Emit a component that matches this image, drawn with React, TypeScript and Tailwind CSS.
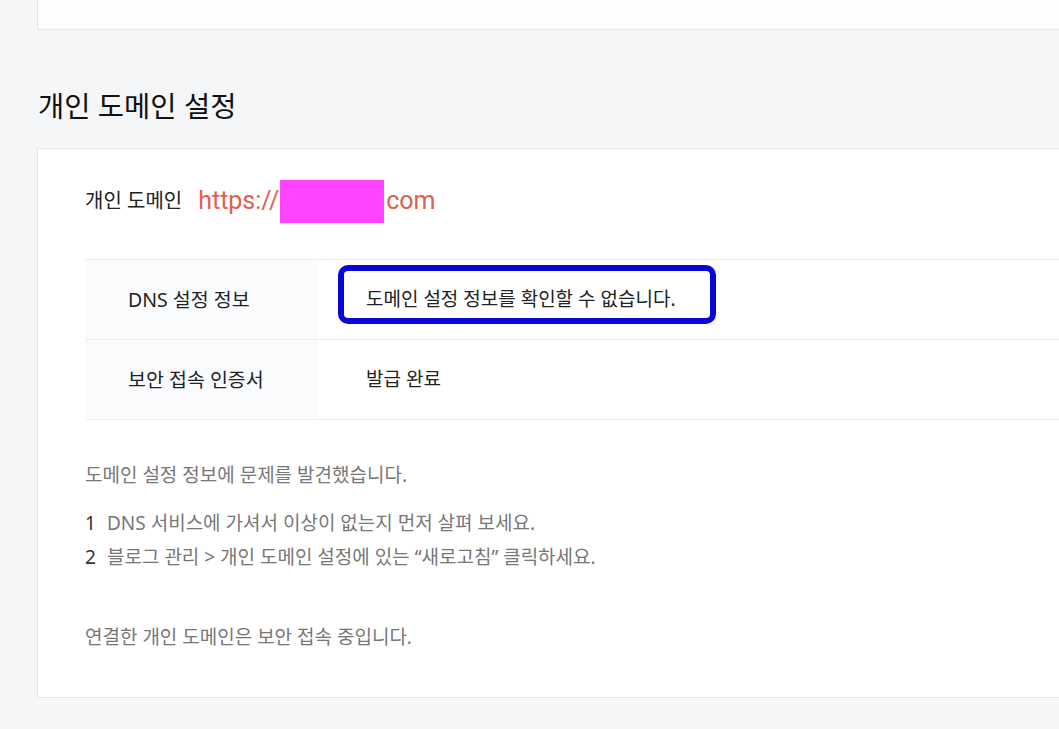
export default function App() {
  const font = { fontFamily: '"Noto Sans", "Noto Sans CJK KR", sans-serif' }
  return (
    <div className="w-[1059px] h-[729px] overflow-hidden bg-[#f5f6f8]" style={font}>
      {/* previous section card (cut off at top) */}
      <div className="ml-[37px] w-[1100px] h-[30px] bg-[#fcfdfe] border border-t-0 border-[#e3e6ea]" />

      <h2 className="ml-[38px] mt-[58px] h-[36px] leading-[36px] text-[28.5px] text-[#111]">
        개인 도메인 설정
      </h2>

      <section className="mt-[24px] ml-[37px] w-[1100px] h-[550px] bg-white border border-[#e3e6ea] pl-[47px]">
        <div className="flex items-center h-[36px] mt-[34px] mb-[40px]">
          <span className="text-[20px] text-[#222]">개인 도메인</span>
          <span
            className="ml-[16px] flex items-center text-[25px] text-[#e0604f]"
            style={{ fontFamily: 'Roboto, "Liberation Sans", sans-serif' }}
          >
            https://
            <span className="inline-block ml-[1px] mr-[2px] w-[104px] h-[43px] bg-[#ff44ff]" />
            com
          </span>
        </div>

        <div className="border-t border-[#eceef1]">
          <div className="flex h-[80px] border-b border-[#eceef1]">
            <div className="w-[233px] shrink-0 bg-[#fafbfd] pl-[43px] flex items-center text-[19.5px] text-[#222]">
              DNS 설정 정보
            </div>
            <div className="relative flex items-center pl-[48px] text-[19px] text-[#222]">
              도메인 설정 정보를 확인할 수 없습니다.
              <div className="absolute left-[20px] top-[5px] w-[378px] h-[59px] border-[6px] border-[#0808d4] rounded-[10px]" />
            </div>
          </div>
          <div className="flex h-[80px] border-b border-[#eceef1]">
            <div className="w-[233px] shrink-0 bg-[#fafbfd] pl-[43px] flex items-center text-[19.5px] text-[#222]">
              보안 접속 인증서
            </div>
            <div className="flex items-center pl-[48px] text-[19px] text-[#222]">발급 완료</div>
          </div>
        </div>

        <div className="text-[19px] text-[#777]">
          <p className="mt-[38px] h-[34px] leading-[34px]">도메인 설정 정보에 문제를 발견했습니다.</p>
          <ol className="mt-[14px]">
            <li className="flex h-[34px] leading-[34px]">
              <span className="w-[22px] text-[#333]">1</span>
              DNS 서비스에 가셔서 이상이 없는지 먼저 살펴 보세요.
            </li>
            <li className="flex h-[34px] leading-[34px]">
              <span className="w-[22px] text-[#333]">2</span>
              블로그 관리 &gt; 개인 도메인 설정에 있는 “새로고침” 클릭하세요.
            </li>
          </ol>
          <p className="mt-[46px] h-[34px] leading-[34px]">연결한 개인 도메인은 보안 접속 중입니다.</p>
        </div>
      </section>
    </div>
  )
}
